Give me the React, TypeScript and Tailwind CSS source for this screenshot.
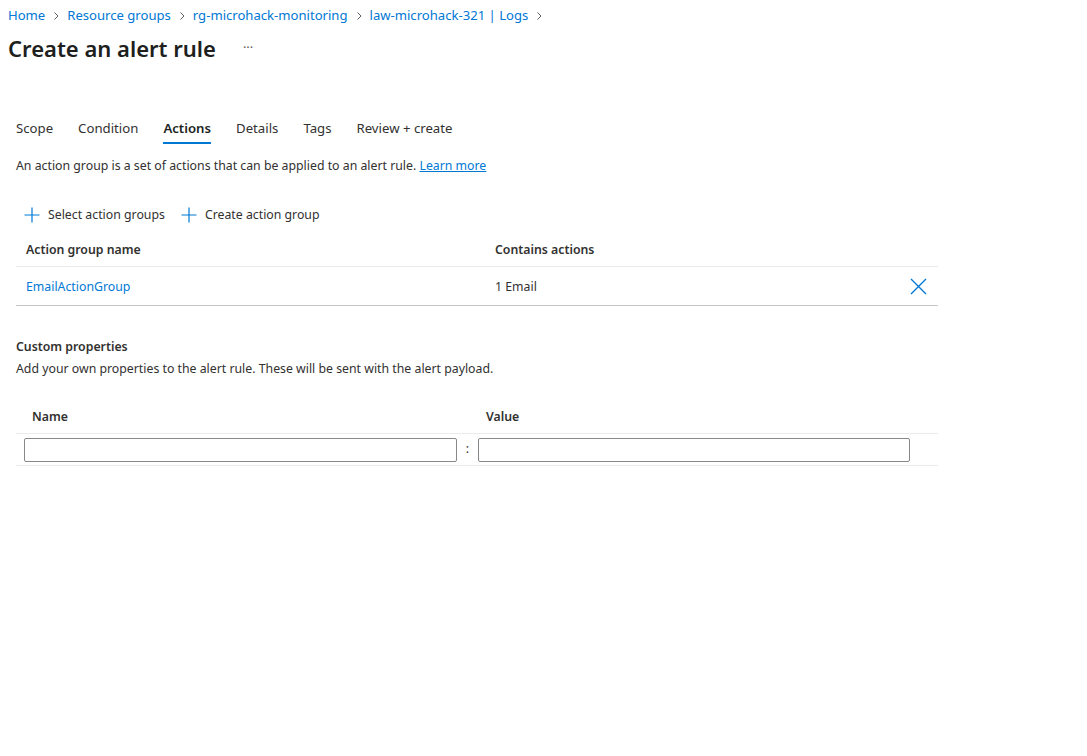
import React from "react";

const Chevron = () => (
  <svg width="12" height="12" viewBox="0 0 12 12" className="mx-[5px]">
    <path d="M4.5 2.5 L8 6 L4.5 9.5" fill="none" stroke="#605e5c" strokeWidth="1" />
  </svg>
);

const Plus = () => (
  <svg width="16" height="16" viewBox="0 0 16 16">
    <path d="M8 0.5 V15.5 M0.5 8 H15.5" stroke="#0078d4" strokeWidth="1.2" fill="none" />
  </svg>
);

const XIcon = () => (
  <svg width="17" height="17" viewBox="0 0 17 17">
    <path d="M1 1 L16 16 M16 1 L1 16" stroke="#0078d4" strokeWidth="1.4" fill="none" />
  </svg>
);

export default function App() {
  const tabs = ["Scope", "Condition", "Actions", "Details", "Tags", "Review + create"];
  return (
    <div
      className="w-[1087px] h-[756px] bg-white text-[#323130] text-[12.3px]"
      style={{ fontFamily: '"Segoe UI", "Noto Sans", "Open Sans", sans-serif' }}
    >
      <div className="flex items-center pl-[8px] pt-[7px] h-[24px] text-[#0078d4] text-[13.1px]">
        <span>Home</span>
        <Chevron />
        <span>Resource groups</span>
        <Chevron />
        <span>rg-microhack-monitoring</span>
        <Chevron />
        <span>law-microhack-321 | Logs</span>
        <Chevron />
      </div>
      <div className="flex items-center pl-[8px] mt-[7px] h-[34px]">
        <h1 className="text-[22px] font-semibold text-[#201f1e]">Create an alert rule</h1>
        <span className="ml-[27px] text-[#605e5c] text-[13px]">···</span>
      </div>

      <div className="flex pl-[16px] mt-[49px] gap-[25px] text-[13.2px]">
        {tabs.map((t) => (
          <div key={t} className="flex flex-col">
            <span className={t === "Actions" ? "font-semibold text-[#201f1e] leading-[28px]" : "leading-[28px] text-[#323130]"}>
              {t}
            </span>
            <div className={t === "Actions" ? "h-[2px] bg-[#0078d4]" : "h-[2px]"} />
          </div>
        ))}
      </div>

      <div className="pl-[16px] mt-[13px] leading-[18px]">
        An action group is a set of actions that can be applied to an alert rule.{" "}
        <span className="text-[#0078d4] underline">Learn more</span>
      </div>

      <div className="flex items-center pl-[24px] mt-[30px] h-[20px]">
        <Plus />
        <span className="ml-[8px]">Select action groups</span>
        <span className="ml-[16px]"><Plus /></span>
        <span className="ml-[8px]">Create action group</span>
      </div>

      <div className="ml-[16px] w-[922px] mt-[8px]">
        <div className="flex items-center h-[34px] pt-[2px] border-b border-[#edebe9] font-semibold">
          <div className="w-[479px] pl-[10px]">Action group name</div>
          <div>Contains actions</div>
        </div>
        <div className="flex items-center h-[39px] pt-[3px] border-b border-[#c8c6c4]">
          <div className="w-[479px] pl-[10px] text-[#0078d4]">EmailActionGroup</div>
          <div className="flex-1">1 Email</div>
          <div className="pr-[11px] flex items-center -mt-[3px]"><XIcon /></div>
        </div>
      </div>

      <div className="pl-[16px] mt-[32px] font-semibold leading-[18px]">Custom properties</div>
      <div className="pl-[16px] mt-[4px] leading-[18px]">
        Add your own properties to the alert rule. These will be sent with the alert payload.
      </div>

      <div className="ml-[16px] w-[922px] mt-[20px]">
        <div className="flex items-center h-[36px] pt-[3px] border-b border-[#edebe9] font-semibold">
          <div className="w-[470px] pl-[16px]">Name</div>
          <div>Value</div>
        </div>
        <div className="flex items-center h-[32px] border-b border-[#edebe9]">
          <input className="ml-[8px] w-[433px] h-[24px] border border-[#8a8886] rounded-[2px]" />
          <span className="w-[21px] text-center">:</span>
          <input className="w-[432px] h-[24px] border border-[#8a8886] rounded-[2px]" />
        </div>
      </div>
    </div>
  );
}
